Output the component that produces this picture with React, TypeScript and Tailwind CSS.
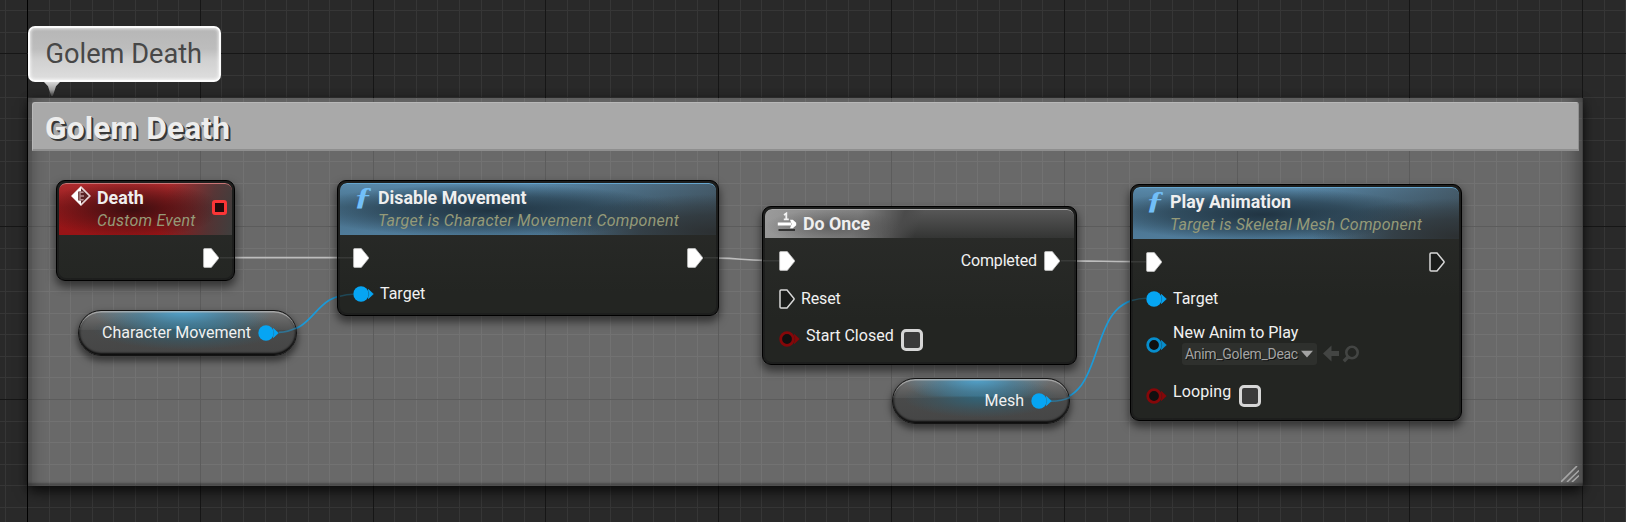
import React from "react";

const GRID = 21.6;
const columns = Array.from({ length: 77 }, (_, i) => i - 1);
const rows = Array.from({ length: 24 }, (_, i) => i - 2);

function Grid() {
  return (
    <svg className="absolute inset-0" width="1626" height="522" shapeRendering="crispEdges">
      {columns.map((i) => (
        <rect key={i} x={Math.floor(27.5 + i * GRID)} y="0" width="1" height="522" fill="#363636" />
      ))}
      {rows.map((i) => (
        <rect key={i} x="0" y={Math.floor(53.85 + i * GRID)} width="1626" height="1" fill="#363636" />
      ))}
      {columns.filter((i) => i % 8 === 0).map((i) => (
        <rect key={i} x={Math.floor(27.5 + i * GRID)} y="0" width="1" height="522" fill={i === 0 ? "#000" : "#161616"} />
      ))}
      {rows.filter((i) => i % 8 === 0).map((i) => (
        <rect key={i} x="0" y={Math.floor(53.85 + i * GRID)} width="1626" height="1" fill="#161616" />
      ))}
    </svg>
  );
}

function Wires() {
  return (
    <svg className="absolute inset-0" width="1626" height="522" fill="none">
      <g stroke="#bdbdbd" strokeWidth="1.7">
        <path d="M219 257.7H353" />
        <path d="M703 257.7C730 257.7 752 260.8 779 260.8" />
        <path d="M1060 260.8C1090 260.8 1116 261.7 1146 261.7" />
      </g>
      <g stroke="#1c9ad8" strokeWidth="1.7">
        <path d="M276 332.5C318 332.5 311 294.3 353 294.3" />
        <path d="M1048 401.3C1112 401.3 1082 298.3 1146 298.3" />
      </g>
    </svg>
  );
}

function ExecPin({ open = false }: { open?: boolean }) {
  return (
    <svg width="16" height="20" viewBox="0 0 16 20" className="shrink-0">
      {open ? (
        <path d="M2 1H8L15 9.5V10.5L8 19H2Q1 19 1 18V2Q1 1 2 1Z" fill="#1a1c1a" stroke="#d8d8d8" strokeWidth="1.5" />
      ) : (
        <path d="M1.5 .6H8.3L15.5 9.4V10.6L8.3 19.4H1.5Q.6 19.4 .6 18.5V1.5Q.6 .6 1.5 .6Z" fill="#fff" stroke="#c4c4c4" strokeWidth=".8" />
      )}
    </svg>
  );
}

function DataPin({ color, open = false }: { color: string; open?: boolean }) {
  return (
    <svg width="21" height="16" viewBox="0 0 21 16" className="shrink-0">
      <path d="M15.4 3.4L20.3 8L15.4 12.6Q17 8 15.4 3.4Z" fill={color} stroke={color} strokeWidth=".8" />
      {open ? (
        <circle cx="8" cy="8" r="6.3" fill="#101010" stroke={color} strokeWidth="2.8" />
      ) : (
        <circle cx="8" cy="8" r="7.7" fill={color} />
      )}
    </svg>
  );
}

function Checkbox() {
  return <span className="block size-[22px] shrink-0 rounded-[5px] border-[3px] border-[#d6d6d6] bg-[#393939]" />;
}

function EventIcon() {
  return (
    <svg width="20" height="20" viewBox="0 0 20 20" className="shrink-0">
      <path d="M10 1.2L18.8 10L10 18.8L1.2 10Z" fill="#5a2324" stroke="#e6d4d4" strokeWidth="1.7" />
      <path d="M10 .6L.6 10L10 19.4V14.5H7.2V5.5H10Z" fill="#fff" />
      <path d="M12.6 6.3H9V13.7H12.6M9 10H13" stroke="#b79293" strokeWidth="1.4" fill="none" />
    </svg>
  );
}

function FunctionIcon() {
  return (
    <span className="flex h-[22px] w-5 shrink-0 scale-x-[1.4] items-center justify-center font-['Liberation_Serif',serif] text-[26px] font-bold italic leading-[22px] text-[#72bff8]">
      ƒ
    </span>
  );
}

function OnceIcon() {
  return (
    <svg width="20" height="20" viewBox="0 0 20 20" className="shrink-0">
      <path d="M7 2.9L9.3 1.4V7.2M6.8 7.3H11.8" stroke="#f2f2f2" strokeWidth="1.8" fill="none" />
      <path d="M.8 12H14" stroke="#fff" strokeWidth="2.8" />
      <path d="M13 7.8H15.8L19.2 10.8V13.2L15.8 16.2H13L14.6 12Z" fill="#fff" />
      <path d="M1.5 18H18" stroke="#333" strokeWidth="2" />
    </svg>
  );
}

const header = {
  red: "bg-[radial-gradient(ellipse_52%_56%_at_42%_50%,rgba(45,12,14,0.85),rgba(60,14,16,0.5)_50%,transparent),linear-gradient(100deg,transparent_60%,rgba(62,60,60,0.75)_86%,#3f3f3e),linear-gradient(180deg,#ad2b2d,#921a1c_45%,#981416)]",
  blue: "bg-[radial-gradient(ellipse_50%_52%_at_40%_52%,rgba(26,42,54,0.85),rgba(30,48,60,0.55)_55%,transparent),radial-gradient(ellipse_45%_75%_at_100%_95%,#2c3032,rgba(44,48,50,0.7)_45%,transparent),linear-gradient(90deg,transparent_50%,rgba(58,64,68,0.6)),linear-gradient(180deg,#5888a9,#466e88_45%,#507c9a)]",
  gray: "bg-[radial-gradient(ellipse_22%_60%_at_22%_58%,rgba(70,70,70,0.6),transparent),linear-gradient(112deg,#9b9b9b,#808080_30%,#4b4b4b_44%,rgba(60,60,60,0)_50%),linear-gradient(180deg,#575757,#343534)]",
};

const edge = {
  red: "border-t-[#c97576]",
  blue: "border-t-[#66a6cf]",
  gray: "border-t-[#a5a5a5]",
};

type Tone = keyof typeof header;

function Node({ place, tone, lead, icon, title, subtitle, badge, children }: {
  place: string; tone: Tone; lead: string; icon: React.ReactNode; title: string; subtitle?: string; badge?: React.ReactNode; children: React.ReactNode;
}) {
  return (
    <section className={`absolute flex flex-col rounded-[9px] border border-black bg-[#191a19]/95 p-[2px] shadow-[0_5px_9px_1px_rgba(0,0,0,0.5)] ${place}`}>
      <div className="flex min-h-0 flex-1 flex-col overflow-hidden rounded-[7px] bg-[linear-gradient(180deg,#2b2c2a,#232522_110px)]">
        <header className={`flex shrink-0 rounded-t-[7px] border-t pt-[2px] ${lead} ${edge[tone]} ${header[tone]} ${subtitle ? "h-[52px]" : "h-[29px]"}`}>
          {icon}
          <div className="flex flex-1 flex-col whitespace-nowrap">
            <h2 className="h-[22px] text-[17.8px] font-bold leading-[23px] text-[#efefef]">{title}</h2>
            {subtitle && <p className="mt-[2px] text-base italic leading-[22px] tracking-[0.22px] text-[#959a78]">{subtitle}</p>}
          </div>
          {badge}
        </header>
        {children}
      </div>
    </section>
  );
}

function Variable({ place, name }: { place: string; name: string }) {
  return (
    <section className={`absolute flex items-center justify-end gap-[7px] rounded-full border border-[#141414] [background:radial-gradient(ellipse_42%_150%_at_48%_0%,rgba(78,168,214,0.92),rgba(72,140,174,0.6)_50%,transparent)_0_0/100%_40%_no-repeat,radial-gradient(ellipse_44%_46%_at_50%_42%,rgba(45,104,128,0.85),rgba(55,90,104,0.5)_60%,transparent),linear-gradient(180deg,rgba(116,116,116,0.96),rgba(82,83,83,0.96)_42%,rgba(72,73,73,0.96)_43%,rgba(68,68,68,0.96))] pr-[17px] shadow-[0_4px_7px_1px_rgba(0,0,0,0.5),inset_0_2px_1px_-0.5px_rgba(255,255,255,0.5),inset_0_-2px_2px_0_rgba(0,0,0,0.75),inset_0_0_2px_1px_rgba(0,0,0,0.35)] ${place}`}>
      <span>{name}</span>
      <DataPin color="#06a5f3" />
    </section>
  );
}

export default function App() {
  return (
    <main className="relative h-[522px] w-[1626px] overflow-hidden bg-[#292929] font-['Roboto',sans-serif] text-base leading-5 text-[#f1f1f1]">
      <Grid />

      <section className="absolute left-[28px] top-[98px] flex h-[388px] w-[1555px] flex-col bg-white/30 px-1 pt-1 shadow-[0_7px_12px_-1px_rgba(0,0,0,0.65),0_0_8px_rgba(0,0,0,0.3),inset_4px_0_0_rgba(60,60,60,0.12),inset_16px_0_14px_-12px_rgba(0,0,0,0.28),inset_-18px_0_16px_-12px_rgba(0,0,0,0.35),inset_0_-4px_2px_-1px_rgba(0,0,0,0.28),inset_0_4px_0_rgba(0,0,0,0.05)]">
        <header className="h-[49px] rounded-t-[3px] border border-b-2 border-[#b8b8b8] border-b-[#8f8f8f] border-r-[#909090] bg-[#a9a9a9] pl-3">
          <h1 className="text-[31.7px] font-bold leading-[51px] tracking-[0.15px] text-[#ededed] [text-shadow:1px_1px_0_#383838,2px_2px_0_#383838]">Golem Death</h1>
        </header>
        <svg className="mb-1 ml-auto mt-auto" width="18" height="16" viewBox="0 0 18 16" stroke="#a6a6a6" strokeWidth="1.6">
          <path d="M0 16L16 0M6 16L18 4.5M11 16L18 9.5" />
        </svg>
      </section>

      <div className="absolute left-[28px] top-[26px] flex h-[56px] w-[193px] items-center rounded-[7px] border-2 border-[#fbfbfb] bg-[linear-gradient(180deg,#b6b6b6,#bdbdbd_40%,#d0d0d0_60%,#dedede)] pb-px pl-[15.5px] shadow-[inset_0_0_3px_1px_rgba(255,255,255,0.65)]">
        <span className="whitespace-nowrap text-[27.2px] leading-8 text-[#474747]">Golem Death</span>
      </div>
      <div className="absolute left-[44px] top-[82px] h-[14px] w-4 bg-[linear-gradient(180deg,#d8d8d8,#a0a0a0_55%,rgba(90,90,90,0.4))] [clip-path:polygon(0_0,100%_0,75%_30%,55%_100%,45%_100%,25%_30%)]" />

      <Wires />

      <Node place="left-[56px] top-[180px] h-[101px] w-[179px]" tone="red" lead="gap-[6px] pl-3" icon={<EventIcon />} title="Death" subtitle="Custom Event"
        badge={<span className="mr-[5px] mt-[14px] size-[15px] rounded-[3px] border-[3px] border-[#fb3536] bg-[#240a0b]" />}>
        <div className="flex h-[46px] shrink-0 items-center justify-end pr-[13px]"><ExecPin /></div>
      </Node>

      <Node place="left-[337px] top-[180px] h-[136px] w-[382px]" tone="blue" lead="gap-[5px] pl-[13px]" icon={<FunctionIcon />} title="Disable Movement" subtitle="Target is Character Movement Component">
        <div className="flex h-[46px] shrink-0 items-center justify-between px-[13px]"><ExecPin /><ExecPin /></div>
        <div className="flex h-[26px] items-center gap-[6px] pl-[13px]"><DataPin color="#06a5f3" /><span>Target</span></div>
      </Node>

      <Node place="left-[762px] top-[206px] h-[159px] w-[315px]" tone="gray" lead="gap-[6px] pl-3" icon={<OnceIcon />} title="Do Once">
        <div className="flex h-[46px] shrink-0 items-center px-[14px]">
          <ExecPin /><span className="ml-auto mr-[7px] tracking-[-0.15px]">Completed</span><ExecPin />
        </div>
        <div className="flex h-[30px] shrink-0 items-center gap-[6px] pl-[14px]"><ExecPin open /><span className="tracking-[-0.15px]">Reset</span></div>
        <div className="flex h-[44px] shrink-0 items-center pl-[14px]">
          <div className="mt-[6px] flex"><DataPin color="#850709" open /></div>
          <span className="-mt-px ml-[6px] w-[95px]">Start Closed</span>
          <div className="mt-[8px]"><Checkbox /></div>
        </div>
      </Node>

      <Node place="left-[1130px] top-[184px] h-[237px] w-[332px]" tone="blue" lead="gap-[5px] pl-3" icon={<FunctionIcon />} title="Play Animation" subtitle="Target is Skeletal Mesh Component">
        <div className="flex h-[46px] shrink-0 items-center justify-between pl-[13px] pr-[14px]"><ExecPin /><ExecPin open /></div>
        <div className="flex h-[27px] shrink-0 items-center gap-[6px] pl-[13px]"><DataPin color="#06a5f3" /><span>Target</span></div>
        <div className="flex h-[62px] shrink-0 items-center gap-[6px] pl-[13px]">
          <div className="mt-[3px] flex"><DataPin color="#078dcc" open /></div>
          <div className="flex flex-col pt-[2px]">
            <span>New Anim to Play</span>
            <div className="flex items-center">
              <div className="ml-[9px] flex h-[22px] w-[135px] items-center rounded-[3px] bg-[#2e302d] pl-[3px] pr-1">
                <span className="w-[113px] shrink-0 whitespace-nowrap text-[14px] leading-[22px] tracking-[-0.3px] text-[#a3a3a3] [text-shadow:1px_1px_0_#101010]">Anim_Golem_Deac</span>
                <svg className="ml-auto" width="12" height="8" viewBox="0 0 12 8"><path d="M0 .8H12L6 7.4Z" fill="#a3a3a3" /></svg>
              </div>
              <svg className="ml-1.5" width="38" height="18" viewBox="0 0 38 18" fill="none">
                <path d="M0 8.5L8.5 .5V6H16V11H8.5V16.5Z" fill="#434543" />
                <circle cx="29" cy="7.5" r="5.7" stroke="#434543" strokeWidth="2.6" />
                <path d="M25 12L20.8 16.2" stroke="#434543" strokeWidth="3.4" />
              </svg>
            </div>
          </div>
        </div>
        <div className="flex h-[41px] shrink-0 items-center pl-[13px]">
          <div className="mt-[2px] flex"><DataPin color="#850709" open /></div>
          <span className="-mt-[6px] ml-[6px] w-[66px] tracking-[0.1px]">Looping</span>
          <div className="mt-[2px]"><Checkbox /></div>
        </div>
      </Node>

      <Variable place="left-[78px] top-[310px] h-[46px] w-[219px]" name="Character Movement" />
      <Variable place="left-[892px] top-[378px] h-[46px] w-[178px]" name="Mesh" />

      <svg className="absolute inset-0" width="1626" height="522" fill="none" strokeWidth="1.6" opacity=".5">
        <path d="M279 332.4Q288 332 296 328" stroke="#1c9ad8" />
        <path d="M1051 401.2Q1062 401 1070 397.4" stroke="#1c9ad8" />
        <path d="M340 296.2Q347 294.4 353 294.3M1132 300.6Q1139 298.4 1146 298.3" stroke="#1c6a8a" />
        <path d="M220 257.7H234M338 257.7H353M704 257.7H718M763 260.8H779M1061 260.8H1076M1131 261.7H1146" stroke="#4a4c4a" />
      </svg>
    </main>
  );
}
